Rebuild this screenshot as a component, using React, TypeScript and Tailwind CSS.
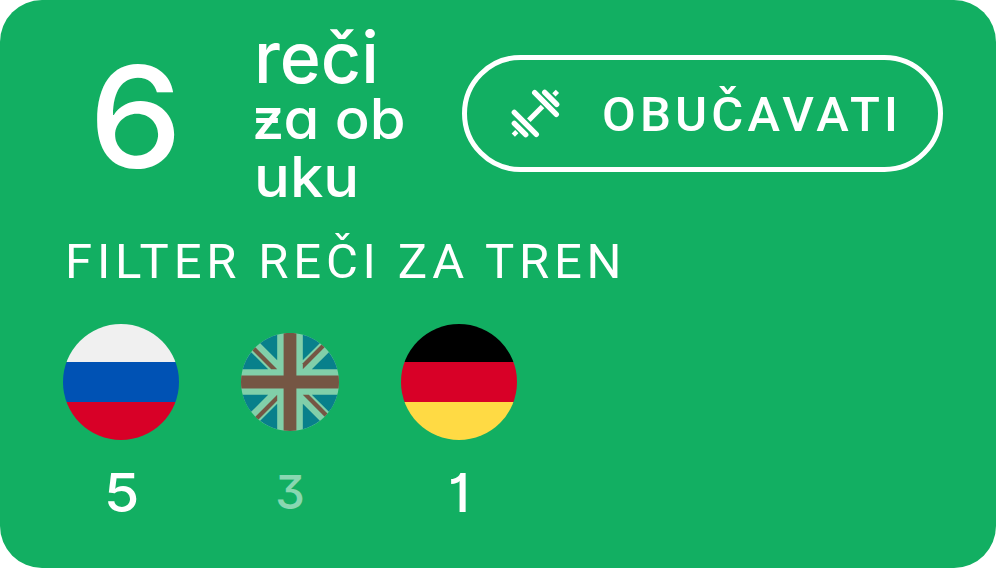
import React from "react";

const display = "font-['Inter','Open_Sans',sans-serif] font-medium [font-feature-settings:'cv11','cv01','cv09']";

function Dumbbell() {
  return (
    <svg width="50" height="50" viewBox="0 0 50 50" fill="none" stroke="white" strokeWidth="5.4" strokeLinecap="round">
      <path d="M24.7 3.7 46.3 25.3M34.7 3.3 46.7 15.3M4.3 23.3 26.3 45.3M4.3 34.3 15.7 45.7" />
      <path d="M18.8 31.2 32.5 17.5" strokeWidth="5" strokeLinecap="butt" />
      <path d="M43.9 5.9 47.4 2.4M3.3 46.2 6.8 42.7" strokeWidth="4.6" strokeLinecap="butt" />
    </svg>
  );
}

function UkFlag() {
  return (
    <svg width="98" height="98" viewBox="0 0 512 512">
      <circle cx="256" cy="256" r="256" fill="#F0F0F0" />
      <g fill="#0052B4">
        <path d="M52.92,100.142c-20.109,26.163-35.272,56.318-44.101,89.077h133.178L52.92,100.142z" />
        <path d="M503.181,189.219c-8.829-32.758-23.993-62.913-44.101-89.076l-89.075,89.076H503.181z" />
        <path d="M8.819,322.784c8.83,32.758,23.993,62.913,44.101,89.075l89.074-89.075L8.819,322.784z" />
        <path d="M411.858,52.921c-26.163-20.109-56.317-35.272-89.076-44.102v133.177L411.858,52.921z" />
        <path d="M100.142,459.079c26.163,20.109,56.318,35.272,89.076,44.102V370.005L100.142,459.079z" />
        <path d="M189.217,8.819c-32.758,8.83-62.913,23.993-89.075,44.101l89.075,89.075V8.819z" />
        <path d="M322.783,503.181c32.758-8.83,62.913-23.993,89.075-44.101l-89.075-89.075V503.181z" />
        <path d="M370.005,322.784l89.075,89.076c20.108-26.162,35.272-56.318,44.101-89.076H370.005z" />
      </g>
      <g fill="#D80027">
        <path d="M509.833,222.609h-220.44V2.167C278.461,0.744,267.317,0,256,0c-11.319,0-22.461,0.744-33.391,2.167v220.44H2.167C0.744,233.539,0,244.683,0,256c0,11.319,0.744,22.461,2.167,33.391h220.44v220.442C233.539,511.256,244.681,512,256,512c11.317,0,22.461-0.743,33.391-2.167v-220.44h220.442C511.256,278.461,512,267.319,512,256C512,244.683,511.256,233.539,509.833,222.609z" />
        <path d="M322.783,322.784L437.019,437.02c5.254-5.252,10.266-10.743,15.048-16.435l-97.802-97.802h-31.482z" />
        <path d="M189.217,322.784L74.98,437.019c5.252,5.254,10.743,10.266,16.435,15.048l97.802-97.804z" />
        <path d="M189.217,189.219L74.981,74.98c-5.254,5.252-10.266,10.743-15.048,16.435l97.803,97.803z" />
        <path d="M322.783,189.219L437.02,74.981c-5.252-5.254-10.743-10.266-16.435-15.047l-97.802,97.803z" />
      </g>
    </svg>
  );
}

function StripedFlag({ colors }: { colors: [string, string, string] }) {
  return (
    <div className="flex h-[116px] w-[116px] flex-col overflow-hidden rounded-full">
      <div className={`h-[37.7px] ${colors[0]}`} />
      <div className={`h-[40.6px] ${colors[1]}`} />
      <div className={`h-[37.7px] ${colors[2]}`} />
    </div>
  );
}

export default function App() {
  return (
    <div className="h-[568px] w-[996px] overflow-hidden rounded-[42px] bg-[#12AF62] text-white">
      <div className="flex h-[228px]">
        <div className={`flex h-[228px] w-[254px] pl-[89px] pt-[42px] text-[141px] leading-[150px] ${display}`}>
          <span className="inline-block h-[150px] origin-left scale-x-[1.05]">6</span>
        </div>
        <div className={`flex w-[208px] flex-col items-start pt-[17px] whitespace-nowrap ${display}`}>
          <span className="inline-block h-[74px] origin-left scale-x-[0.985] text-[71px] leading-[80px]">reči</span>
          <span className="relative -ml-[2px] inline-block h-[58px] origin-left scale-x-[1.035] text-[56px] leading-[57px]">
            za ob
            <span className="absolute left-[4px] top-[27px] h-[5px] w-[21px] bg-white" />
          </span>
          <span className="inline-block h-[57px] origin-left scale-x-[1.065] text-[56px] leading-[57px]">uku</span>
        </div>
        <button className="mt-[55px] flex h-[117px] w-[481px] items-center rounded-full border-5 border-white pl-[43px] font-['Roboto',sans-serif] text-[49px] font-medium tracking-[4.2px]">
          <Dumbbell />
          <span className="ml-[42px] pt-[2px] whitespace-nowrap">OBUČAVATI</span>
        </button>
      </div>
      <div className="h-[96px] whitespace-nowrap pl-[65px] font-['Roboto',sans-serif] text-[49px] leading-[67px] tracking-[4.8px]">
        FILTER REČI ZA TREN
      </div>
      <div className={`flex pl-[63px] ${display}`}>
        <div className="flex w-[116px] flex-col items-center">
          <StripedFlag colors={["bg-[#F0F0F0]", "bg-[#0052B4]", "bg-[#D80027]"]} />
          <span className="ml-[2px] mt-[23px] inline-block scale-x-[1.06] text-[54px] leading-[60px]">5</span>
        </div>
        <div className="ml-[62px] flex w-[98px] flex-col items-center pt-[9px] opacity-50">
          <UkFlag />
          <span className="mt-[31px] text-[47px] leading-[60px]">3</span>
        </div>
        <div className="ml-[62px] flex w-[116px] flex-col items-center">
          <StripedFlag colors={["bg-black", "bg-[#D80027]", "bg-[#FFDA44]"]} />
          <span className="mt-[23px] text-[54px] leading-[60px]">1</span>
        </div>
      </div>
    </div>
  );
}
